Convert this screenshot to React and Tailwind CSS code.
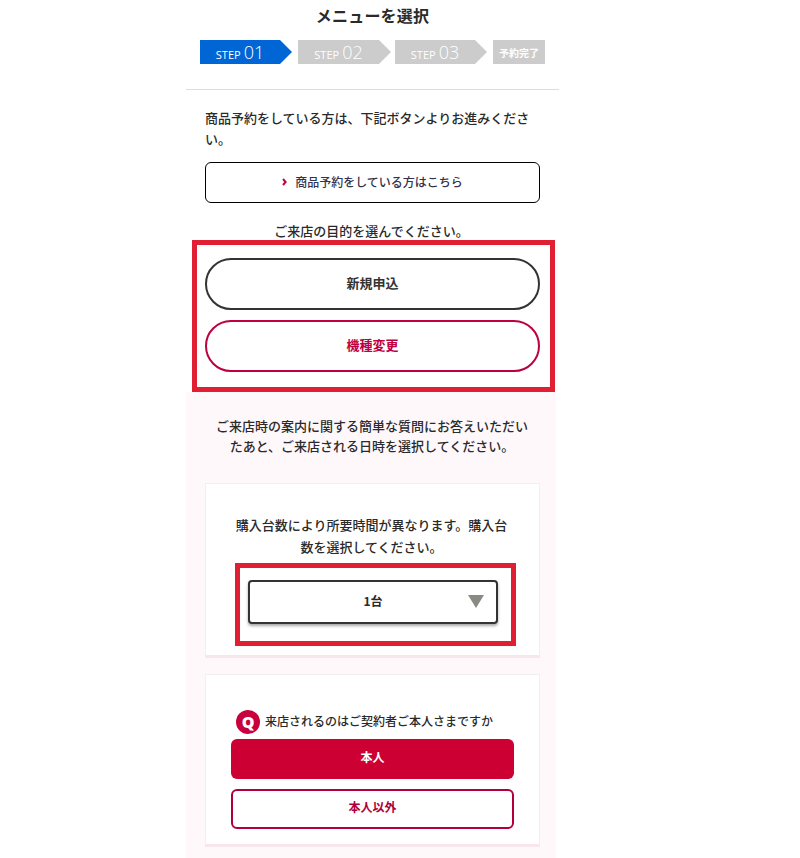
const FONT = "font-['Noto_Sans_CJK_JP','Noto_Sans',sans-serif]";

function Step({ width, label, num, active, arrow = true }) {
  return (
    <div
      className={`flex h-6 items-center justify-center ${active ? "bg-[#0066d6]" : "bg-[#cccccc]"} ${arrow ? "[clip-path:polygon(0_0,calc(100%-12px)_0,100%_50%,calc(100%-12px)_100%,0_100%)] pr-[12px]" : ""}`}
      style={{ width }}
    >
      {label ? (
        <span className="font-['Open_Sans',sans-serif] text-white">
          <span className="text-[11px]">{label}</span>
          <span className="ml-[3px] text-[18px] font-light leading-6">{num}</span>
        </span>
      ) : (
        <span className="text-[10px] font-bold text-white">予約完了</span>
      )}
    </div>
  );
}

export default function App() {
  return (
    <div className={`ml-[186px] h-[858px] w-[373px] overflow-hidden bg-white text-[#2a2a2a] ${FONT}`}>
      <h1 className="h-[30px] text-center text-base font-bold leading-[30px] tracking-[0.2px]">メニューを選択</h1>

      <div className="mt-[10px] flex pl-[14px]">
        <Step width={92} label="STEP" num="01" active />
        <div className="w-[6px]" />
        <Step width={93} label="STEP" num="02" />
        <div className="w-1" />
        <Step width={92} label="STEP" num="03" />
        <div className="w-[6px]" />
        <Step width={52} arrow={false} />
      </div>

      <div className="mt-[25px] h-px bg-[#dddddd]" />

      <p className="px-[19px] pt-[17px] text-[13px] font-medium leading-[21px]">
        商品予約をしている方は、下記ボタンよりお進みください。
      </p>

      <button className="ml-[19px] mt-[13px] flex h-[41px] w-[335px] items-center justify-center gap-2 rounded-md border border-black bg-white pb-[2px] text-xs font-medium text-[#33334d]">
        <svg width="5" height="8" viewBox="0 0 5 8">
          <path d="M1 1l2.6 3L1 7" fill="none" stroke="#c8003c" strokeWidth="2" />
        </svg>
        商品予約をしている方はこちら
      </button>

      <p className="mt-[19px] h-[18px] pr-[2px] text-center text-[13px] font-medium leading-[17px]">ご来店の目的を選んでください。</p>

      <div className="ml-[6px] flex h-[152px] w-[363px] flex-col gap-[10px] border-[5px] border-[#e02032] px-2 pt-[13px]">
        <button className="h-[52px] w-[335px] rounded-full border-2 border-[#333333] bg-white pb-[2px] text-[13px] font-bold text-[#333333]">新規申込</button>
        <button className="h-[52px] w-[335px] rounded-full border-2 border-[#bd003f] bg-white pb-[2px] text-[13px] font-bold text-[#bd003f]">機種変更</button>
      </div>

      <section className="w-[370px] bg-[#fff8fa] pb-5 pt-6">
        <p className="pl-[2px] text-center text-[13px] font-medium leading-5">
          ご来店時の案内に関する簡単な質問にお答えいただい
          <br />
          たあと、ご来店される日時を選択してください。
        </p>

        <div className="ml-[19px] mt-[27px] h-[175px] w-[335px] border border-b-[3px] border-[#f3eef0] border-b-[#f7e6ec] bg-white pt-[30px]">
          <p className="pr-[2px] text-center text-[13px] font-medium leading-[22px]">
            購入台数により所要時間が異なります。購入台
            <br />
            数を選択してください。
          </p>
          <div className="ml-[29px] mt-[5px] h-[83px] w-[281px] border-[5px] border-[#e02032] pl-2 pt-3">
            <div className="relative flex h-[44px] w-[250px] items-center justify-center rounded border-2 border-[#333333] bg-white pb-[2px] text-xs font-bold shadow-[0_2px_3px_rgba(0,0,0,0.35)]">
              1台
              <svg className="absolute right-[12px] top-[13px]" width="16" height="13" viewBox="0 0 16 13">
                <path d="M0 0h16L8 13z" fill="#8a8a84" />
              </svg>
            </div>
          </div>
        </div>

        <div className="ml-[19px] mt-4 h-[173px] w-[335px] border border-b-[3px] border-[#f3eef0] border-b-[#f7e6ec] bg-white pl-[25px] pt-[35px]">
          <div className="flex h-6 items-center gap-[5px] pl-[5px] text-xs font-medium">
            <span className="flex h-6 w-6 items-center justify-center rounded-full bg-[#c8003c] font-['Open_Sans',sans-serif] text-base font-extrabold text-white">Q</span>
            <span className="pb-[3px]">来店されるのはご契約者ご本人さまですか</span>
          </div>
          <button className="mt-[5px] block h-10 w-[283px] rounded-md bg-[#cc0033] pb-1 text-xs font-bold text-white">本人</button>
          <button className="mt-[10px] block h-10 w-[283px] rounded-md border-2 border-[#b0003a] bg-white pb-1 text-xs font-bold text-[#b0003a]">本人以外</button>
        </div>
      </section>
    </div>
  );
}
